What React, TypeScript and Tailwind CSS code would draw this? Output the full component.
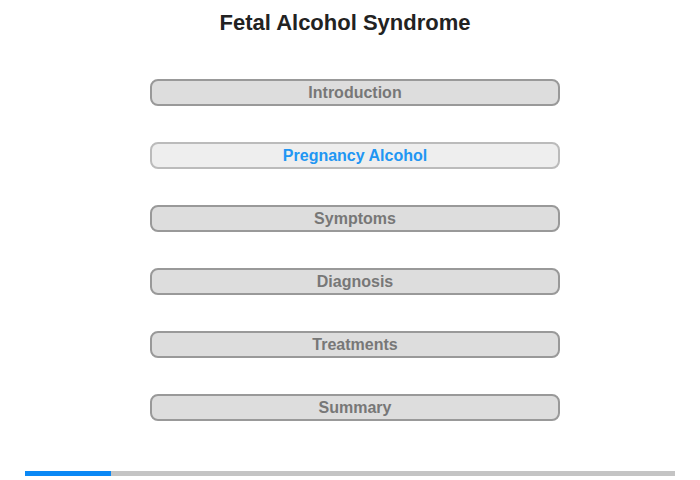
const topics = [
  "Introduction",
  "Pregnancy Alcohol",
  "Symptoms",
  "Diagnosis",
  "Treatments",
  "Summary",
];

const App = () => {
  const current = 1;

  return (
    <div className="h-[480px] w-[700px] bg-white font-['Liberation_Sans',Arial,sans-serif]">
      {/* title */}
      <h1 className="pr-[10px] pt-[10px] text-center text-[22px] font-bold leading-[26px] text-[#222]">
        Fetal Alcohol Syndrome
      </h1>

      {/* topic buttons */}
      <div className="mt-[43px] flex flex-col items-center gap-[36px] pl-[10px]">
        {topics.map((t, i) => (
          <button
            key={t}
            className={
              i === current
                ? "h-[27px] w-[410px] rounded-[8px] border-2 border-[#bbbbbb] bg-[#eeeeee] text-[16px] font-bold text-[#2196f3]"
                : "h-[27px] w-[410px] rounded-[8px] border-2 border-[#999999] bg-[#dddddd] text-[16px] font-bold text-[#777777]"
            }
          >
            {t}
          </button>
        ))}
      </div>

      {/* progress */}
      <div className="mx-[25px] mt-[50px] flex h-[5px] bg-[#c4c4c4]">
        <div className="h-full w-[86px] bg-[#0a88f5]" />
      </div>
    </div>
  );
};

export default App;
